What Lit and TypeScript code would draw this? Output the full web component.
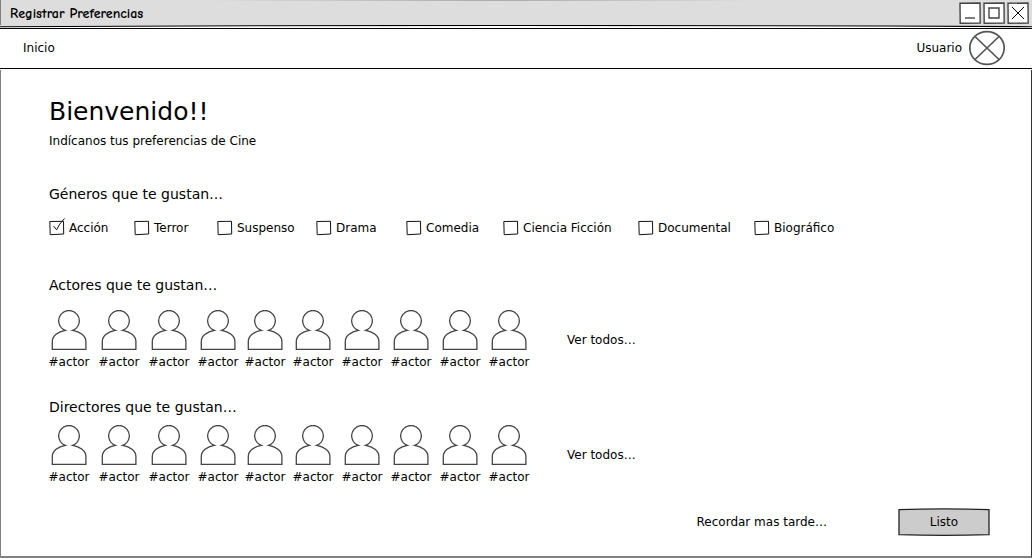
import { LitElement, html, svg, css } from "lit";
import { customElement, property, state } from "lit/decorators.js";

@customElement("person-card")
class PersonCard extends LitElement {
  @property() name = "";

  static styles = css`
    :host { display: block; width: 40px; }
    .card { display: flex; flex-direction: column; align-items: center; gap: 4px; color: #000; text-decoration: none; }
    .icon { display: block; width: 36px; height: 40px; }
    .name { line-height: 16px; white-space: nowrap; }
  `;

  render() {
    return html`<a class="card" href="#actor">
      <svg class="icon" viewBox="0 0 36 40" fill="#fff" stroke="#444" stroke-width="1.3" aria-hidden="true">
        <path d="M1.3 39.4V31.5C1.3 26 7 21.6 14.3 20.4A10.3 10.3 0 1 1 21.7 20.4C29 21.6 34.9 26 34.9 31.5V39.4Z"></path>
      </svg>
      <span class="name">${this.name}</span>
    </a>`;
  }
}

@customElement("app-root")
class AppRoot extends LitElement {
  @state() private genres = [
    { name: "Acción", on: true },
    { name: "Terror", on: false },
    { name: "Suspenso", on: false },
    { name: "Drama", on: false },
    { name: "Comedia", on: false },
    { name: "Ciencia Ficción", on: false },
    { name: "Documental", on: false },
    { name: "Biográfico", on: false },
  ];

  private people = Array.from({ length: 10 }, () => "#actor");

  static styles = css`
    :host {
      display: flex; flex-direction: column; box-sizing: border-box; min-height: 100vh;
      background: #fff; color: #000; font: 12px/16px "DejaVu Sans", sans-serif;
    }
    a { color: inherit; text-decoration: none; }
    button { font: inherit; color: inherit; padding: 0; border: 0; background: none; cursor: pointer; }
    .titlebar {
      display: flex; align-items: center; justify-content: space-between; height: 25px;
      padding: 0 3px 0 9px; border-left: 1px solid #808080;
      background: linear-gradient(90deg, #ddd 20%, #aaa 48%, #ddd 73%) top / 100% 1px no-repeat #ddd;
    }
    .title { font: bold 14px/16px "Comic Neue", "Comic Sans MS", "Open Sans", sans-serif; padding-top: 3px; }
    .controls { display: flex; gap: 2px; padding-top: 1px; }
    .control, .control svg { display: block; width: 22px; height: 22px; }
    .rule { display: block; width: 100%; height: 3px; }
    .nav {
      display: flex; align-items: center; justify-content: space-between; height: 38px;
      padding: 0 27px 0 23px; border-top: 1px solid #000;
    }
    .user { display: flex; align-items: center; gap: 7px; }
    .avatar { display: block; width: 36px; height: 36px; }
    .main {
      flex: 1; display: flex; flex-direction: column; padding: 26px 41px 20px 48px;
      border: solid #808080; border-width: 0 1px 2px; border-right-color: #333;
    }
    h1 { margin: 0; font-size: 25px; font-weight: 400; line-height: 32px; }
    .lead { margin: 5px 0 0; }
    h2 { margin: 0; font-size: 14px; font-weight: 400; line-height: 20px; }
    .genres { margin-top: 35px; }
    .options { display: grid; grid-template-columns: 85px 83px 99px 90px 97px 135px 116px auto; margin-top: 16px; }
    .option { display: flex; align-items: center; gap: 4px; white-space: nowrap; cursor: pointer; }
    .box { display: grid; width: 16px; height: 16px; }
    .box > * { grid-area: 1 / 1; width: 16px; height: 16px; margin: 0; }
    .box svg { overflow: visible; }
    .box input { appearance: none; cursor: pointer; }
    .actors { margin-top: 39px; }
    .directors { margin-top: 27px; }
    .row { display: flex; align-items: center; gap: 37px; }
    .actors .row { margin-top: 15px; }
    .directors .row { margin-top: 8px; }
    .people { display: grid; grid-template-columns: 50px 50px 49px 47px 48px 49px 49px 49px 49px 41px; }
    .footer { display: flex; align-items: center; justify-content: flex-end; gap: 71px; margin-top: auto; }
    .submit { display: grid; place-items: center; width: 92px; height: 28px; }
    .submit > * { grid-area: 1 / 1; }
    .submit svg { width: 92px; height: 28px; }
  `;

  private toggle(index: number) {
    this.genres = this.genres.map((g, i) => (i === index ? { ...g, on: !g.on } : g));
  }

  private control(label: string, glyph: unknown) {
    return html`<button class="control" aria-label=${label}>
      <svg viewBox="0 0 22 22" fill="none" stroke="#444" stroke-width="1.4">
        <path d="M1 1.3L21 1L21.2 21L1.2 21.3Z" fill="#fff"></path>${glyph}
      </svg>
    </button>`;
  }

  private group(cls: string, heading: string) {
    return html`<section class=${cls}>
      <h2>${heading}</h2>
      <div class="row">
        <div class="people">${this.people.map((p) => html`<person-card name=${p}></person-card>`)}</div>
        <a href="#todos">Ver todos…</a>
      </div>
    </section>`;
  }

  render() {
    return html`
      <header class="titlebar">
        <span class="title">Registrar Preferencias</span>
        <div class="controls">
          ${this.control("Minimizar", svg`<path d="M6 16H16"></path>`)}
          ${this.control("Maximizar", svg`<path d="M6 6H16V16H6Z"></path>`)}
          ${this.control("Cerrar", svg`<path d="M5 5L17 17M17 5L5 17" stroke="#000" stroke-width="1"></path>`)}
        </div>
      </header>
      <svg class="rule" viewBox="0 0 1000 3" preserveAspectRatio="none" aria-hidden="true">
        <path d="M0 0H1000V1.5Q500 0 0 1.5Z" fill="#ddd"></path>
        <path d="M0 1.7Q480 -.7 1000 1.7" fill="none" stroke="#000" stroke-width="1.1"></path>
      </svg>
      <nav class="nav">
        <a href="#inicio">Inicio</a>
        <a class="user" href="#usuario">Usuario
          <svg class="avatar" viewBox="0 0 36 36" fill="none" stroke="#555" stroke-width="1.7" aria-hidden="true">
            <ellipse cx="18" cy="18" rx="17.2" ry="16.4"></ellipse>
            <path d="M6 6.5L30 29.5M30 6.5L6 29.5"></path>
          </svg>
        </a>
      </nav>
      <svg class="rule" viewBox="0 0 1000 3" preserveAspectRatio="none" aria-hidden="true">
        <path d="M0 1.5Q450 -.1 1000 1.5" fill="none" stroke="#000" stroke-width="1"></path>
      </svg>
      <main class="main">
        <h1>Bienvenido!!</h1>
        <p class="lead">Indícanos tus preferencias de Cine</p>
        <section class="genres">
          <h2>Géneros que te gustan…</h2>
          <div class="options">
            ${this.genres.map((g, i) => html`<label class="option">
              <span class="box">
                <svg viewBox="0 0 16 16" fill="none" stroke="#111" aria-hidden="true">
                  <path d="M.8 1.5L14.5 1.3L14.7 14L1.2 14.7Z"></path>
                  ${g.on ? svg`<path d="M4.5 6L7.6 9.8Q10 4 15.5 -1.5"></path>` : ""}
                </svg>
                <input type="checkbox" .checked=${g.on} @change=${() => this.toggle(i)} />
              </span>
              ${g.name}
            </label>`)}
          </div>
        </section>
        ${this.group("actors", "Actores que te gustan…")}
        ${this.group("directors", "Directores que te gustan…")}
        <footer class="footer">
          <a href="#tarde">Recordar mas tarde…</a>
          <button class="submit">
            <svg viewBox="0 0 92 28" fill="#ccc" stroke="#222" stroke-width="1.3" aria-hidden="true">
              <path d="M1 1.6Q46 .2 91 1.6V26.6Q46 28 1 26.6Z"></path>
            </svg>
            <span>Listo</span>
          </button>
        </footer>
      </main>
    `;
  }
}
